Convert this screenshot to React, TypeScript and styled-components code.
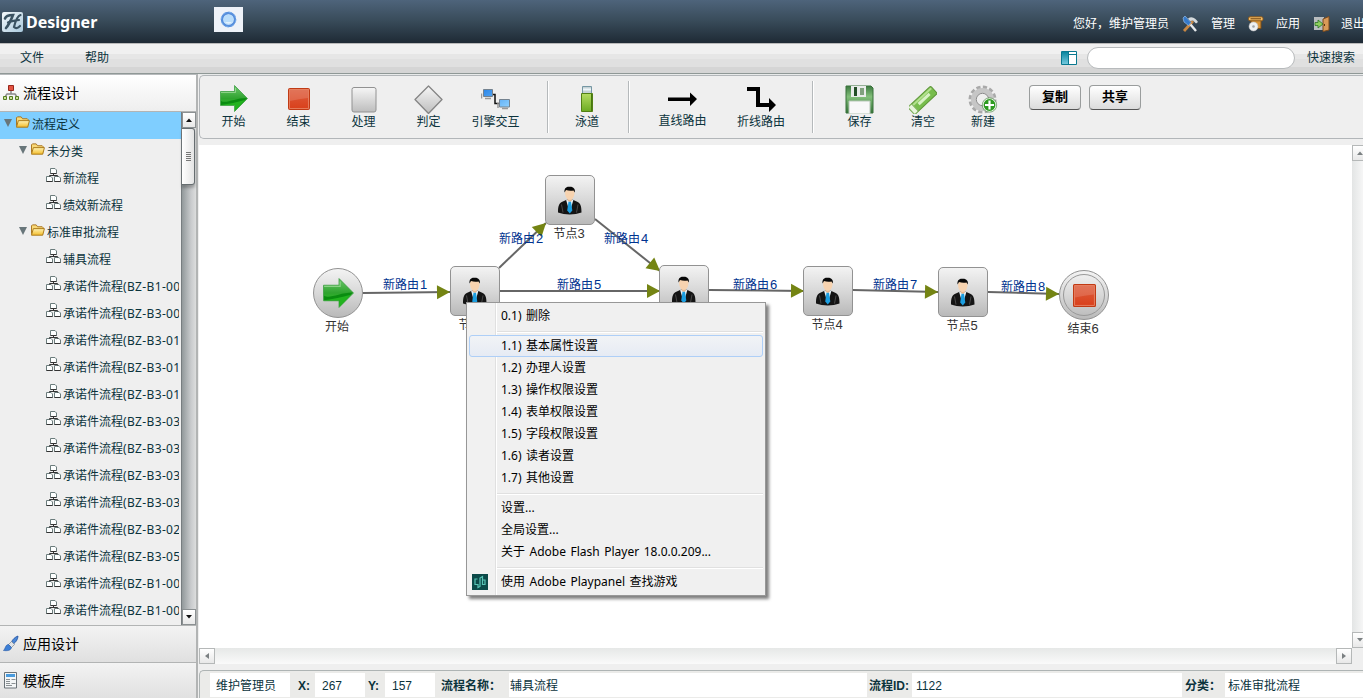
import React from 'react';
import styled, { createGlobalStyle } from 'styled-components';

const ui = `"Noto Sans", "Noto Sans CJK SC", sans-serif`;
const flash = `"Liberation Sans", "Noto Sans CJK SC", sans-serif`;
const ink = '#0b333c';

const Global = createGlobalStyle`
  *, *::before, *::after { box-sizing: border-box; }
  html, body { margin: 0; padding: 0; overflow: hidden; }
  body { font: 12px/16px ${ui}; color: ${ink}; background: #efefef; }
  svg { display: block; flex: none; }
`;

const Page = styled.div`
  width: 1363px; height: 698px; overflow: hidden;
  display: flex; flex-direction: column; background: #efefef; white-space: nowrap;
`;
const Header = styled.header`
  height: 43px; flex: none; display: flex; align-items: flex-start;
  background: linear-gradient(#4e647b, #3a4d5c 45%, #1f2b36 98%);
`;
const Brand = styled.div`
  display: flex; width: 214px; padding: 12px 0 0 2px; gap: 3px; color: #fff;
  font: bold 16px/20px "Noto Sans", sans-serif;
`;
const Orb = styled.div`
  width: 29px; height: 25px; margin-top: 7px; background: #eef2f8; display: grid; place-items: center;
`;
const UserNav = styled.nav`
  margin-left: auto; height: 43px; width: 290px; flex: none; display: flex; align-items: center;
  padding-top: 5px; color: #fff;
`;
const NavText = styled.span<{ $w: number }>`width: ${p => p.$w}px; flex: none; line-height: 16px;`;
const NavIcon = styled.span<{ $w: number }>`width: ${p => p.$w}px; flex: none;`;

const MenuBar = styled.div`
  height: 31px; flex: none; display: flex; align-items: center; padding: 0 0 1px 20px;
  border-top: 1px solid #b9b9b9; border-bottom: 1px solid #8f9896;
  background: linear-gradient(#f0f0f0 0 33%, #e6e6e6 34% 50%, #e0e0e0 51% 80%, #d5d5d5 81%);
`;
const MenuName = styled.span`width: 65px;`;
const Search = styled.div`
  width: 208px; height: 22px; border: 1px solid #b7babc; border-radius: 11px; background: #fff; margin: 0 12px 0 10px;
`;
const SearchGroup = styled.div`margin-left: auto; display: flex; align-items: center; width: 302px;`;

const Body = styled.div`flex: 1; display: flex; min-height: 0;`;
const Sidebar = styled.aside`
  width: 198px; flex: none; display: flex; flex-direction: column; border-right: 2px solid #b2b4b4;
  border-top: 1px solid #b7babc; margin-right: 1px;
`;
const Panel = styled.div<{ $h: number; $open?: boolean }>`
  height: ${p => p.$h}px; flex: none; display: flex; align-items: center; padding: 0 0 1px 3px; gap: 4px;
  font-size: 14px; color: #000; border-bottom: 1px solid #b2b4b4;
  background: ${p => (p.$open ? 'linear-gradient(#fff, #eee)' : 'linear-gradient(#f3f3f3, #e0e0e0)')};
`;
const TreeWrap = styled.div`height: 514px; display: flex; flex: none; border-bottom: 1px solid #b2b4b4;`;
const Tree = styled.div`width: 181px; overflow: hidden;`;
const TreeRow = styled.div<{ $level: number; $on?: boolean }>`
  height: 27px; display: flex; align-items: flex-start; padding-left: ${p => [4, 19, 46][p.$level]}px;
  background: ${p => (p.$on ? '#7fceff' : 'transparent')}; line-height: 26px; overflow: hidden;
`;
const TreeText = styled.span`margin: 0 2px 0 1px; overflow: hidden; flex: 1;`;
const Code = styled.span`letter-spacing: .35px;`;
const IconBox = styled.span<{ $t: number; $r?: number }>`margin-top: ${p => p.$t}px; margin-right: ${p => p.$r || 0}px; flex: none;`;

const Track = styled.div`
  width: 15px; display: flex; flex-direction: column; border-left: 1px solid #777d80;
  background: linear-gradient(90deg, #92999b, #c9cbcd 65%, #dcdddd);
`;
const ArrowBtn = styled.div<{ $s?: number; $dim?: boolean }>`
  width: ${p => p.$s || 14}px; height: ${p => (p.$s ? p.$s : 16)}px; flex: none; display: grid; place-items: center;
  border: 1px solid ${p => (p.$dim ? '#b5b8b8' : '#8b9092')}; background: linear-gradient(#fff, #e8e8e8);
`;
const Thumb = styled.div`
  width: 13px; height: 57px; border: 1px solid #666d70; border-left: 0; border-radius: 0 3px 3px 0;
  background: linear-gradient(90deg, #fff, #e4e4e4); display: flex; flex-direction: column; justify-content: center;
  align-items: center; gap: 1px; box-shadow: 0 3px 3px rgba(0,0,0,.25);
`;
const Grip = styled.i`width: 5px; height: 1px; background: #777;`;
const Spring = styled.div`flex: 1;`;

const Main = styled.main`flex: 1; display: flex; flex-direction: column; min-width: 0; border-top: 1px solid #e8eaea;`;
const Toolbar = styled.div`
  height: 64px; flex: none; display: flex; border: 1px solid #b2b6b9; border-radius: 5px 0 0 5px; border-right: 0;
  background: #efefef; margin-bottom: 6px; padding-left: 1px;
`;
const Tool = styled.div<{ $w: number; $b?: number }>`
  width: ${p => p.$w}px; flex: none; display: flex; flex-direction: column; align-items: center; padding-top: 9px;
  line-height: 16px;
  svg { margin-bottom: ${p => p.$b ?? 0}px; }
`;
const Sep = styled.div<{ $l: number; $r?: number }>`
  width: 2px; height: 52px; flex: none; margin: 5px ${p => p.$r || 0}px 0 ${p => p.$l}px;
  background: linear-gradient(90deg, #b5b9bb 50%, #fff 50%);
`;
const PushButton = styled.button<{ $l: number }>`
  width: 52px; height: 25px; flex: none; margin: 9px 0 0 ${p => p.$l}px; padding: 0 0 2px; border-radius: 4px;
  border: 1px solid #9a9d9d; border-bottom-color: #555; background: linear-gradient(#fff, #dcdcdc);
  font: bold 13px/18px ${flash}; color: #000;
`;

const Viewport = styled.div`flex: none; height: 503px; display: flex;`;
const Stage = styled.div`position: relative; width: 1153px; height: 503px; background: #fff; overflow: hidden;`;
const VScroll = styled.div`
  width: 11px; flex: none; display: flex; flex-direction: column; justify-content: space-between; overflow: hidden;
  background: linear-gradient(90deg, #e3e5e5, #f6f6f6);
`;
const HScroll = styled.div`
  height: 16px; width: 1153px; flex: none; display: flex; justify-content: space-between;
  background: linear-gradient(#e6e8e7, #fafafa);
`;
const Status = styled.div`
  margin-top: 6px; height: 30px; flex: none; display: flex; align-items: flex-start; padding: 2px 0 0 10px;
  border: 1px solid #aeb4b4; border-right: 0; border-bottom: 0; border-radius: 5px 0 0 0; background: #ebebe9;
  font: 12px/26px ${flash};
`;
const Field = styled.span<{ $w: number; $p: number }>`
  width: ${p => p.$w}px; height: 24px; padding-left: ${p => p.$p}px; background: #fff; flex: none;
`;
const Caption = styled.b<{ $w: number; $p: number }>`
  width: ${p => p.$w}px; padding-left: ${p => p.$p}px; flex: none;
`;

const Node = styled.div<{ $round?: boolean }>`
  position: absolute; width: 50px; height: 50px; display: grid; place-items: center;
  border: 1px solid #929292; border-radius: ${p => (p.$round ? '50%' : '5px')};
  background: linear-gradient(#f3f3f3, #d8d8d8 50%, #b9b9b9);
`;
const Ring = styled.div`
  width: 42px; height: 42px; border: 1px solid #999; border-radius: 50%; display: grid; place-items: center;
`;
const NodeLabel = styled.span`
  position: absolute; top: 50px; left: -11px; width: 68px; text-align: center; color: #333; font: 12px/16px ${flash};
`;
const RouteLabel = styled.span`
  position: absolute; color: #00338f; font: 12px/16px ${flash};
`;
const Digit = styled.span<{ $gap?: number }>`font-size: 13px; margin-left: ${p => p.$gap || 0}px;`;

const Context = styled.div`
  position: absolute; left: 267px; top: 157px; width: 300px; height: 294px; padding: 2px;
  border: 1px solid #979797; background: linear-gradient(90deg, #f1f1f1 28px, #e0e0e0 28px 29px, #fff 29px 30px, #f0f0f0 30px);
  box-shadow: 3px 3px 3px rgba(0,0,0,.5); color: #000;
`;
const Item = styled.div<{ $on?: boolean }>`
  height: 22px; line-height: 19px; padding-left: 31px; border: 1px solid ${p => (p.$on ? '#aecff7' : 'transparent')};
  border-radius: 3px; position: relative; background: ${p => (p.$on ? 'linear-gradient(#f1f3f6, #e6ebf4)' : 'transparent')};
  word-spacing: 1.4px;
`;
const Rule = styled.div`height: 2px; margin: 4px 0 2px 28px; border-top: 1px solid #e0e0e0; border-bottom: 1px solid #fff;`;
const PlayIcon = styled.span`position: absolute; left: 2px; top: 2px;`;

const Folder = () => (
  <svg width="15" height="15" viewBox="1 0 16 15">
    <path d="M1.500 11V2.500l1-1h4l1.500 2h5l1 1V7" fill="#f9d978" stroke="#a66f18" />
    <path d="M1.500 12.500l2-7h11.800l-1.800 7z" fill="url(#fold)" stroke="#a87515" />
  </svg>
);
const Flow = () => (
  <svg width="16" height="16" viewBox="0 0 16 16" fill="#fdffff" stroke="#6b7c7c">
    <path d="M4.500 1.500h4.500l1.500 1.500v3.500h-6zM.5 9.500h4.500l1.500 1.500v3.500h-6zM8.500 9.500h4.500l1.500 1.500v3.500h-6z" />
    <path d="M4.500 6.500h6M.5 14.500h6M8.500 14.500h6M7.500 7v1.500M3.500 9.500v-1h8v1" fill="none" stroke="#333" />
  </svg>
);
const Twist = () => <svg width="8" height="8" viewBox="0 0 8 8"><path d="M0 0h8L4 8z" fill="#68767a" /></svg>;
const Tri = ({ d, dim }: { d: string; dim?: boolean }) => {
  const paths: Record<string, string> = { up: 'M0 5L3 1.500 6 5z', down: 'M0 1L3 4.500 6 1z', left: 'M5 0L1 3 5 6z', right: 'M1 0L5 3 1 6z' };
  return <svg width="6" height="6"><path d={paths[d]} fill={dim ? '#7b8082' : '#111'} /></svg>;
};
const GreenArrow = ({ w = 28, h = 27 }: { w?: number; h?: number }) => (
  <svg width={w} height={h} viewBox="0 0 28 27">
    <path d="M.5 6.500h14v-6L27.500 13.500 14.500 26.500v-6H.5z" fill="url(#ga)" stroke="#3fa045" strokeWidth=".8" />
    <path d="M1 20v-4c5 3 14-3 26-3L15 25.500V20z" fill="#0a8c10" />
    <path d="M1 20c8-1 16-3 24-5L15 25.500V20z" fill="#28bd22" opacity=".8" />
    <path d="M1 7.500h14.500V3" fill="none" stroke="#a5dea0" opacity=".7" />
  </svg>
);
const Stop = ({ s = 22 }: { s?: number }) => (
  <svg width={s} height={s} viewBox="0 0 22 22">
    <rect x=".5" y=".5" width="21" height="21" rx="1" fill="url(#stop)" stroke="#c03a14" />
    <path d="M1.500 20.500v-19h19v19z" fill="none" stroke="#e8896a" strokeWidth=".8" />
    <path d="M2 2h18v8Q11 11 2 13z" fill="#fff" opacity=".14" />
  </svg>
);
const Person = () => (
  <svg width="26" height="29" viewBox="0 0 26 29">
    <path d="M1 26.500c0-7 1-10 6-11.500l4-2h3.500l4 2c5 1.500 6 4.500 6 11.500-7 2.500-16.500 2.500-23.500 0z" fill="#141414" />
    <path d="M9 13.500l3.700 13 3.800-13z" fill="#e8f2f8" />
    <path d="M11.500 15.500h2.500l1.300 9-2.500 3-2.600-3z" fill="#1c9ee0" />
    <path d="M10.500 10.500h4.500v4l-2.200 1.500-2.300-1.500z" fill="#e5b892" />
    <path d="M8 6.500c0-6 9.500-6 9.500 0 0 4-2 7.500-4.700 7.500S8 10.500 8 6.500z" fill="#f7d3b0" />
    <path d="M7.600 6.500C6.800 3 9 .6 12 .8c4-.6 6.800 2 5.700 5.700L16.500 4.500C14 5 11 4.800 9 4z" fill="#080808" />
    <path d="M4.500 18.500l1.500 8M21 18.500l-1.500 8" stroke="#555" strokeWidth=".8" fill="none" />
  </svg>
);

const nodes = [
  { x: 251, y: 121, n: '1' }, { x: 346, y: 30, n: '3' }, { x: 460, y: 120, n: '2' },
  { x: 604, y: 121, n: '4' }, { x: 739, y: 122, n: '5' },
];
const routes: [number, number, string][] = [[184, 132, '1'], [300, 86, '2'], [405, 86, '4'], [358, 132, '5'], [534, 132, '6'], [674, 132, '7'], [802, 134, '8']];
const edges = [
  [363, 293, 450, 292], [499, 268, 546, 223], [595, 219, 660, 271], [500, 291, 660, 291],
  [709, 290, 804, 291], [853, 290, 938, 292], [988, 292, 1059, 294],
];
const codes = ['B1-00', 'B3-00', 'B3-01', 'B3-01', 'B3-01', 'B3-03', 'B3-03', 'B3-03', 'B3-03', 'B3-02', 'B3-05', 'B1-00', 'B1-00'];
const tree: [number, string, string?][] = [
  [0, '流程定义'], [1, '未分类'], [2, '新流程'], [2, '绩效新流程'], [1, '标准审批流程'], [2, '辅具流程'],
  ...codes.map(c => [2, '承诺件流程', `(BZ-${c}`] as [number, string, string]),
];
const settings = ['1.1) 基本属性设置', '1.2) 办理人设置', '1.3) 操作权限设置', '1.4) 表单权限设置', '1.5) 字段权限设置', '1.6) 读者设置', '1.7) 其他设置'];

const DefsSvg = styled.svg`position: absolute;`;
const Defs = () => (
  <DefsSvg width="0" height="0">
    <defs>
      <linearGradient id="ga" x2="0" y2="1"><stop stopColor="#6cc76a" /><stop offset=".5" stopColor="#2fa32f" /><stop offset="1" stopColor="#30d420" /></linearGradient>
      <linearGradient id="stop" x2="0" y2="1"><stop stopColor="#dd5f40" /><stop offset="1" stopColor="#d93f1a" /></linearGradient>
      <linearGradient id="fold" x2="0" y2="1"><stop stopColor="#fff3b5" /><stop offset="1" stopColor="#f3bd2c" /></linearGradient>
      <linearGradient id="silver" x2="0" y2="1"><stop stopColor="#f6f6f6" /><stop offset="1" stopColor="#bdbdbd" /></linearGradient>
      <linearGradient id="lime" x2="0" y2="1"><stop stopColor="#b5dc62" /><stop offset="1" stopColor="#6cab22" /></linearGradient>
      <linearGradient id="disk" x2="0" y2="1"><stop stopColor="#3d7a40" /><stop offset=".4" stopColor="#82bf7a" /><stop offset="1" stopColor="#347338" /></linearGradient>
      <linearGradient id="logo" x2="1" y2="1"><stop stopColor="#f5f9fb" /><stop offset="1" stopColor="#a9c9dd" /></linearGradient>
      <linearGradient id="pane" x2="0" y2="1"><stop stopColor="#07859f" /><stop offset="1" stopColor="#75c9de" /></linearGradient>
      <linearGradient id="screen" x2="1" y2="1"><stop stopColor="#2b86e8" /><stop offset="1" stopColor="#8dd0ff" /></linearGradient>
    </defs>
  </DefsSvg>
);

export default function App() {
  return (
    <Page>
      <Global />
      <Defs />
      <Header>
        <Brand>
          <svg width="21" height="20" viewBox="0 0 21 20">
            <rect width="21" height="20" rx="2" fill="url(#logo)" />
            <path d="M3 6.500c1-3 5-3.500 8-3.500C9 8 7.500 12 4 16" stroke="#3b5362" strokeWidth="2.600" fill="none" strokeLinecap="round" />
            <path d="M18.500 3c-3.500 1-5 6-6.500 12 2 2 4 1 6-1M6 10.500c4-2 7-1.500 11-2.500" stroke="#3b5362" strokeWidth="2.200" fill="none" strokeLinecap="round" />
          </svg>
          Designer
        </Brand>
        <Orb>
          <svg width="17" height="17" viewBox="0 0 17 17"><circle cx="8.500" cy="8.500" r="6.500" fill="#d5ecff" stroke="#568edc" strokeWidth="2.400" /><circle cx="8.500" cy="8.500" r="7.400" fill="none" stroke="#7db1ee" strokeDasharray="3 2.800" /><circle cx="8.500" cy="8.500" r="4.800" fill="#b9ddfb" /><path d="M5 11a4.500 4.500 0 0 0 7 0z" fill="#fff" opacity=".6" /></svg>
        </Orb>
        <UserNav>
          <NavText $w={109}>您好，维护管理员</NavText>
          <NavIcon $w={29}>
            <svg width="17" height="16" viewBox="0 0 17 16"><path d="M2 15L11 5" stroke="#c98742" strokeWidth="2.800" /><path d="M6 2.500c4-3 8 0 10 3.500l-2 1.500-3-3-3 .5z" fill="#d4d9dc" /><path d="M1 2l2-2 6 6.500-2.500 3L2 6z" fill="#3579c9" stroke="#a4c9f2" strokeWidth=".6" /><path d="M8.500 8.500l5.500 6.500" stroke="#e7eaec" strokeWidth="2.400" /></svg>
          </NavIcon>
          <NavText $w={37}>管理</NavText>
          <NavIcon $w={28}>
            <svg width="16" height="16" viewBox="0 0 16 16"><path d="M3 4h10v8.500H3z" fill="#d9953a" stroke="#7b4d16" /><rect x=".5" y=".8" width="14.500" height="4" rx="1.500" fill="#f2bd66" stroke="#8a571b" /><path d="M2.500 2.800h10.500" stroke="#6b3f0e" /><circle cx="5.500" cy="10.500" r="4.500" fill="#eef0f2" stroke="#bbb" strokeWidth=".5" /><circle cx="5.500" cy="10.500" r="1.300" fill="#a0a4a8" /></svg>
          </NavIcon>
          <NavText $w={38}>应用</NavText>
          <NavIcon $w={27}>
            <svg width="16" height="16" viewBox="0 0 16 16"><path d="M0 1h10v13H0z" fill="#b9bdbf" /><path d="M9 3l6-2.500V14L9 15.500z" fill="#d99a58" stroke="#7b4a1c" /><path d="M10.500 8v2" stroke="#5b3510" /><path d="M1 6.500h3V4l5 4-5 4V9.500H1z" fill="#8dcf5c" stroke="#2c7423" strokeWidth=".8" /></svg>
          </NavIcon>
          <NavText $w={30}>退出</NavText>
        </UserNav>
      </Header>
      <MenuBar>
        <MenuName>文件</MenuName>
        <MenuName>帮助</MenuName>
        <SearchGroup>
          <svg width="16" height="14" viewBox="0 0 16 14"><path d="M.5.500h15v13H.5z" fill="#fff" stroke="#0a7990" /><path d="M1 1h7v12H1z" fill="url(#pane)" /><path d="M8 3.500h8M7.500 1v12" stroke="#0a7990" /></svg>
          <Search />
          <span>快速搜索</span>
        </SearchGroup>
      </MenuBar>
      <Body>
        <Sidebar>
          <Panel $h={37} $open>
            <svg width="16" height="17" viewBox="0 0 16 17"><path d="M8 7v3M2.500 12l1.500-2h8l1.500 2" fill="none" stroke="#8b8b8b" strokeWidth="1.500" /><path d="M5.500 1.500h5v5h-5z" fill="#e45442" stroke="#97271c" /><path d="M.5 12.500h3v3h-3zM6.500 12.500h3v3h-3zM12.500 12.500h3v3h-3z" fill="#cce39a" stroke="#557c21" /></svg>
            流程设计
          </Panel>
          <TreeWrap>
            <Tree>
              {tree.map(([lv, t, code], i) => (
                <TreeRow key={i} $level={lv} $on={i === 0}>
                  {lv < 2 && <IconBox $t={7} $r={4}><Twist /></IconBox>}
                  <IconBox $t={lv < 2 ? 3 : 1}>{lv < 2 ? <Folder /> : <Flow />}</IconBox>
                  <TreeText>{t}{code && <Code>{code}</Code>}</TreeText>
                </TreeRow>
              ))}
            </Tree>
            <Track>
              <ArrowBtn><Tri d="up" /></ArrowBtn>
              <Thumb><Grip /><Grip /><Grip /><Grip /><Grip /></Thumb>
              <Spring />
              <ArrowBtn><Tri d="down" /></ArrowBtn>
            </Track>
          </TreeWrap>
          <Panel $h={37}>
            <svg width="16" height="17" viewBox="0 0 16 17"><path d="M15 1C12 2 9.500 4.500 8.500 7l2 2C13 7 15 4 15 1z" fill="#4a86d6" stroke="#1e4f9f" strokeWidth=".8" /><path d="M8.500 6.500l3 3-3 3-3-3z" fill="#dfe3e8" stroke="#7f868e" strokeWidth=".7" /><path d="M5.500 9.500c-3 0-3 4-5 6 4 .5 7.500 0 8-3z" fill="#3d7fd6" stroke="#1f54a5" strokeWidth=".6" /></svg>
            应用设计
          </Panel>
          <Panel $h={37}>
            <svg width="16" height="17" viewBox="-1 0 16 17"><path d="M.5.500h12v15.500H.5z" fill="#f4f6f7" stroke="#6b7378" /><path d="M2 2h9v3H2z" fill="#4a9bdd" /><path d="M2 7.500h4M2 9.500h4M2 11.500h4M2 13.500h6M7.500 7.500h4M7.500 11.500h4" stroke="#8a9093" /></svg>
            模板库
          </Panel>
        </Sidebar>
        <Main>
          <Toolbar>
            <Tool $w={65} $b={2}><GreenArrow /><span>开始</span></Tool>
            <Tool $w={65}>
              <svg width="28" height="29" viewBox="-3 -3 28 29"><rect x=".5" y=".5" width="21" height="21" rx="1" fill="url(#stop)" stroke="#c03a14" /><path d="M1.500 20.500v-19h19v19z" fill="none" stroke="#e8896a" strokeWidth=".8" /><path d="M2 2h18v8Q11 11 2 13z" fill="#fff" opacity=".14" /></svg>
              <span>结束</span>
            </Tool>
            <Tool $w={65}><svg width="28" height="29" viewBox="0 0 28 29"><rect x="2" y="2.500" width="24" height="24.500" rx="2" fill="url(#silver)" stroke="#929292" /></svg><span>处理</span></Tool>
            <Tool $w={65}><svg width="29" height="29" viewBox="0 0 29 29"><path d="M14.500 1L28 14.500 14.500 28.500 1 14.500z" fill="url(#silver)" stroke="#858585" strokeLinejoin="round" strokeWidth="1.300" /></svg><span>判定</span></Tool>
            <Tool $w={69}>
              <svg width="30" height="29" viewBox="0 0 30 29">
                <path d="M11 9.500h3v9h5" fill="none" stroke="#111" strokeWidth="1.500" />
                <path d="M2.500 4.500h9v7h-9zM18.500 14.500h10V22h-10z" fill="url(#screen)" stroke="#74828f" />
                <path d="M4 13.500h6M21 23.500h6M.5 8.500v5M17 18v5" stroke="#999" strokeWidth="1.500" />
              </svg><span>引擎交互</span>
            </Tool>
            <Sep $l={17} />
            <Tool $w={76}>
              <svg width="14" height="29" viewBox="0 0 14 29"><path d="M2.500 1.500h9v7h-9z" fill="#c5d2d6" stroke="#7597a3" /><path d="M3 4.500h8" stroke="#eef6f8" strokeWidth="2" /><path d="M1.500 8.500h11v18h-11z" fill="url(#lime)" stroke="#528015" /><path d="M11.500 9v17" stroke="#47780f" /></svg><span>泳道</span>
            </Tool>
            <Sep $l={3} />
            <Tool $w={105} $b={-1}><svg width="29" height="29" viewBox="0 0 29 29"><path d="M0 12.500h22v-5l7 6.500-7 7v-5H0z" fill="#000" /></svg><span>直线路由</span></Tool>
            <Tool $w={52}><svg width="29" height="29" viewBox="0 0 29 29"><path d="M0 2h13v16h9v-5l7 7-7 7v-5H9V6H0z" fill="#000" /></svg><span>折线路由</span></Tool>
            <Sep $l={25} />
            <Tool $w={91}>
              <svg width="29" height="29" viewBox="0 0 29 29"><path d="M1 1h25l2 2v25H1z" fill="url(#disk)" stroke="#39713b" /><path d="M6 1h15v11H6z" fill="#e9ecea" /><path d="M9 2h3v9H9z" fill="#234e26" /><path d="M15 3h4v7h-4z" fill="#81a17e" /><path d="M4 16h21v13H4z" fill="#f8f8f8" stroke="#b7c7b7" /></svg><span>保存</span>
            </Tool>
            <Tool $w={36}>
              <svg width="28" height="29" viewBox="0 0 28 29"><g transform="rotate(-43 14 15)"><rect x="-2" y="10" width="31" height="10" rx="1.500" fill="#78bd4d" stroke="#5d9638" /><path d="M0 12h28" stroke="#b3e18e" strokeWidth="2" /><rect x="8" y="13.500" width="15" height="3" fill="#d8f0c5" /><rect x="-2" y="10" width="5" height="10" rx="1" fill="#e7f5dc" stroke="#86b466" /></g></svg><span>清空</span>
            </Tool>
            <Tool $w={84}>
              <svg width="30" height="29" viewBox="-1 0 30 29"><circle cx="13.500" cy="14.500" r="12" fill="none" stroke="#a9a9a9" strokeWidth="4" strokeDasharray="4 2.280" /><circle cx="13.500" cy="14.500" r="9" fill="none" stroke="#c6c6c6" strokeWidth="5" /><circle cx="13.500" cy="14.500" r="6.200" fill="none" stroke="#8b8b8b" /><circle cx="20.500" cy="20" r="6.500" fill="#2d9b20" stroke="#e9f4e7" strokeWidth="1.200" /><circle cx="20.500" cy="20" r="7.200" fill="none" stroke="#417d38" strokeWidth=".6" /><path d="M20.500 15.500v9M16 20h9" stroke="#fff" strokeWidth="2.200" /></svg><span>新建</span>
            </Tool>
            <PushButton $l={4}>复制</PushButton>
            <PushButton $l={8}>共享</PushButton>
          </Toolbar>
          <Viewport>
            <Stage>
              <svg width="1153" height="503" viewBox="199 145 1153 503">
                {edges.map(([a, b, c, d], i) => (
                  <g key={i}>
                    <path d={`M${a} ${b}L${c} ${d}`} stroke="#666" strokeWidth="2" />
                    <path transform={`translate(${c} ${d}) rotate(${(Math.atan2(d - b, c - a) * 180) / Math.PI})`} d="M0 0L-13-7V7z" fill="#748413" />
                  </g>
                ))}
              </svg>
              {routes.map(([x, y, n]) => <RouteLabel key={n} style={{ left: x, top: y }}>新路由<Digit $gap={1}>{n}</Digit></RouteLabel>)}
              <Node $round style={{ left: 114, top: 123 }}><GreenArrow w={31} h={30} /><NodeLabel>开始</NodeLabel></Node>
              {nodes.map(n => <Node key={n.n} style={{ left: n.x, top: n.y }}><Person /><NodeLabel>节点<Digit>{n.n}</Digit></NodeLabel></Node>)}
              <Node $round style={{ left: 860, top: 125 }}><Ring><Stop s={23} /></Ring><NodeLabel>结束<Digit>6</Digit></NodeLabel></Node>
              <Context>
                <Item>0.1) 删除</Item>
                <Rule />
                {settings.map((s, i) => <Item key={s} $on={i === 0}>{s}</Item>)}
                <Rule />
                <Item>设置...</Item>
                <Item>全局设置...</Item>
                <Item>关于 Adobe Flash Player 18.0.0.209...</Item>
                <Rule />
                <Item>
                  <PlayIcon><svg width="16" height="16" viewBox="0 0 16 16"><path d="M0 0h16v16H0z" fill="#0c4a49" /><path d="M5.500 5H3v5.500h3v3l2-1V4l2.500-1.500v8H13V6h-2.500" fill="none" stroke="#59c5b6" strokeWidth="1.200" /></svg></PlayIcon>
                  使用 Adobe Playpanel 查找游戏
                </Item>
              </Context>
            </Stage>
            <VScroll><ArrowBtn $s={16} $dim><Tri d="up" dim /></ArrowBtn><ArrowBtn $s={16} $dim><Tri d="down" dim /></ArrowBtn></VScroll>
          </Viewport>
          <HScroll><ArrowBtn $s={16} $dim><Tri d="left" dim /></ArrowBtn><ArrowBtn $s={16} $dim><Tri d="right" dim /></ArrowBtn></HScroll>
          <Status>
            <Field $w={80} $p={6}>维护管理员</Field>
            <Caption $w={25} $p={8}>X:</Caption>
            <Field $w={50} $p={7}>267</Field>
            <Caption $w={20} $p={3}>Y:</Caption>
            <Field $w={50} $p={7}>157</Field>
            <Caption $w={74} $p={6}>流程名称：</Caption>
            <Field $w={358} $p={1}>辅具流程</Field>
            <Caption $w={45} $p={2}>流程ID:</Caption>
            <Field $w={270} $p={4}>1122</Field>
            <Caption $w={43} $p={3}>分类：</Caption>
            <Field $w={140} $p={3}>标准审批流程</Field>
          </Status>
        </Main>
      </Body>
    </Page>
  );
}
